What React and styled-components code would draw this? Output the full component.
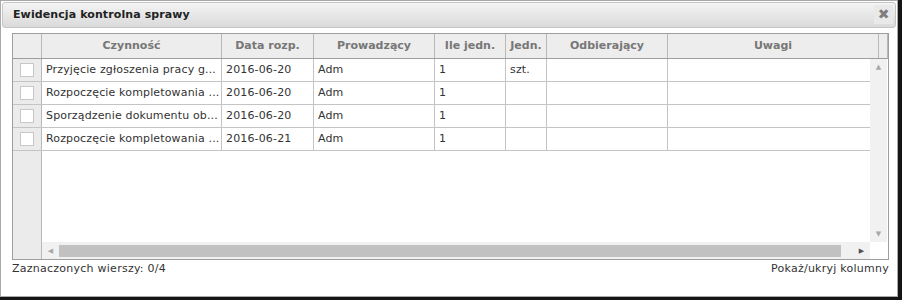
import React from 'react';
import styled, { createGlobalStyle } from 'styled-components';

const GlobalStyle = createGlobalStyle`
  html, body {
    margin: 0;
    padding: 0;
    background: #151515;
  }
  body {
    font-family: "DejaVu Sans", Verdana, sans-serif;
    font-size: 11px;
    color: #333;
  }
`;

const columns = [
  { key: 'czynnosc', title: 'Czynność', width: 180 },
  { key: 'data', title: 'Data rozp.', width: 92 },
  { key: 'prow', title: 'Prowadzący', width: 121 },
  { key: 'ile', title: 'Ile jedn.', width: 71 },
  { key: 'jedn', title: 'Jedn.', width: 41 },
  { key: 'odb', title: 'Odbierający', width: 121 },
  { key: 'uwagi', title: 'Uwagi', width: 211 },
];

const rows = [
  { id: 1, czynnosc: 'Przyjęcie zgłoszenia pracy g...', data: '2016-06-20', prow: 'Adm', ile: '1', jedn: 'szt.', odb: '', uwagi: '' },
  { id: 2, czynnosc: 'Rozpoczęcie kompletowania ...', data: '2016-06-20', prow: 'Adm', ile: '1', jedn: '', odb: '', uwagi: '' },
  { id: 3, czynnosc: 'Sporządzenie dokumentu ob...', data: '2016-06-20', prow: 'Adm', ile: '1', jedn: '', odb: '', uwagi: '' },
  { id: 4, czynnosc: 'Rozpoczęcie kompletowania ...', data: '2016-06-21', prow: 'Adm', ile: '1', jedn: '', odb: '', uwagi: '' },
];

function App() {
  return (
    <>
      <GlobalStyle />
      <Dialog>
        <TitleBar>
          <Title>Ewidencja kontrolna sprawy</Title>
          <CloseButton type="button">✖</CloseButton>
        </TitleBar>
        <Content>
          <Grid>
            <HeaderRow>
              <CheckHead />
              {columns.map((col) => (
                <HeadCell key={col.key} $width={col.width}>
                  {col.title}
                </HeadCell>
              ))}
              <HeadFiller />
            </HeaderRow>
            <Body>
              <Main>
                <RowsArea>
                  {rows.map((row) => (
                    <Row key={row.id}>
                      <CheckCell>
                        <CheckBox />
                      </CheckCell>
                      {columns.map((col) => (
                        <Cell key={col.key} $width={col.width}>
                          {row[col.key]}
                        </Cell>
                      ))}
                    </Row>
                  ))}
                  <Filler>
                    <Gutter />
                  </Filler>
                </RowsArea>
                <BottomBar>
                  <Gutter />
                  <HScroll>
                    <Arrow $dim>◀</Arrow>
                    <HThumb />
                    <Arrow>▶</Arrow>
                  </HScroll>
                </BottomBar>
              </Main>
              <VScrollCol>
                <VScroll>
                  <Arrow $dim>▲</Arrow>
                  <Arrow $dim>▼</Arrow>
                </VScroll>
                <Corner />
              </VScrollCol>
            </Body>
          </Grid>
          <Footer>
            <span>Zaznaczonych wierszy: 0/4</span>
            <span>Pokaż/ukryj kolumny</span>
          </Footer>
        </Content>
      </Dialog>
    </>
  );
}

export default App;

const Dialog = styled.div`
  box-sizing: border-box;
  width: 898px;
  height: 297px;
  border: 1px solid #a9a9a9;
  background: #fff;
  padding: 1px;
`;

const TitleBar = styled.div`
  box-sizing: border-box;
  height: 26px;
  display: flex;
  align-items: center;
  justify-content: space-between;
  padding: 0 2px 1px 10px;
  border: 1px solid #c6c6c6;
  border-radius: 3px;
  background: linear-gradient(#f4f4f4, #dadada);
`;

const Title = styled.div`
  font-weight: bold;
  font-size: 11px;
  color: #222;
  letter-spacing: 0.1px;
`;

const CloseButton = styled.button`
  width: 19px;
  height: 19px;
  padding: 0;
  border: none;
  background: #e9e9e9;
  color: #7e7e7e;
  font-size: 14px;
  line-height: 19px;
  font-family: "DejaVu Sans", sans-serif;
`;

const Content = styled.div`
  padding: 5px 8px 0 10px;
`;

const Grid = styled.div`
  box-sizing: border-box;
  width: 877px;
  height: 227px;
  border: 1px solid #9e9e9e;
  display: flex;
  flex-direction: column;
  overflow: hidden;
`;

const HeaderRow = styled.div`
  display: flex;
  height: 24px;
  border-bottom: 1px solid #9e9e9e;
  background: #ededed;
  flex-shrink: 0;
`;

const CheckHead = styled.div`
  box-sizing: border-box;
  width: 29px;
  flex-shrink: 0;
  border-right: 1px solid #b8b8b8;
`;

const HeadCell = styled.div`
  box-sizing: border-box;
  width: ${(p) => p.$width}px;
  flex-shrink: 0;
  border-right: 1px solid #b8b8b8;
  display: flex;
  align-items: center;
  justify-content: center;
  padding-bottom: 1px;
  font-weight: bold;
  color: #777;
  white-space: nowrap;
  overflow: hidden;
`;

const HeadFiller = styled.div`
  box-sizing: border-box;
  width: 9px;
  flex-shrink: 0;
  border-right: 1px solid #b8b8b8;
`;

const Body = styled.div`
  flex: 1;
  display: flex;
  min-height: 0;
`;

const Main = styled.div`
  flex: 1;
  min-width: 0;
  display: flex;
  flex-direction: column;
`;

const RowsArea = styled.div`
  flex: 1;
  display: flex;
  flex-direction: column;
  overflow: hidden;
`;

const Row = styled.div`
  display: flex;
  height: 22px;
  border-bottom: 1px solid #c4c4c4;
  flex-shrink: 0;
`;

const CheckCell = styled.div`
  box-sizing: border-box;
  width: 29px;
  flex-shrink: 0;
  background: #ebebeb;
  border-right: 1px solid #b8b8b8;
  display: flex;
  align-items: center;
  justify-content: center;
`;

const CheckBox = styled.div`
  box-sizing: border-box;
  width: 14px;
  height: 14px;
  border: 1px solid #c8c8c8;
  background: #fff;
`;

const Cell = styled.div`
  box-sizing: border-box;
  width: ${(p) => p.$width}px;
  flex-shrink: 0;
  border-right: 1px solid #c4c4c4;
  padding: 0 4px 2px;
  display: flex;
  align-items: center;
  white-space: nowrap;
  overflow: hidden;
  color: #333;
  letter-spacing: 0.15px;
`;

const Filler = styled.div`
  flex: 1;
  display: flex;
`;

const Gutter = styled.div`
  box-sizing: border-box;
  width: 29px;
  flex-shrink: 0;
  background: #ebebeb;
  border-right: 1px solid #b8b8b8;
`;

const BottomBar = styled.div`
  display: flex;
  height: 17px;
  flex-shrink: 0;
`;

const HScroll = styled.div`
  flex: 1;
  display: flex;
  align-items: center;
  background: #f1f1f1;
  padding: 0 3px;
  gap: 3px;
`;

const HThumb = styled.div`
  flex: 1;
  height: 12px;
  margin-right: 12px;
  background: #c1c1c1;
`;

const Arrow = styled.span`
  width: 11px;
  text-align: center;
  font-size: 7px;
  color: ${(p) => (p.$dim ? '#a8a8a8' : '#505050')};
`;

const VScrollCol = styled.div`
  width: 17px;
  flex-shrink: 0;
  display: flex;
  flex-direction: column;
  margin-right: 1px;
`;

const VScroll = styled.div`
  flex: 1;
  background: #f1f1f1;
  display: flex;
  flex-direction: column;
  justify-content: space-between;
  align-items: center;
  padding: 4px 0;
`;

const Corner = styled.div`
  height: 17px;
  background: #fff;
`;

const Footer = styled.div`
  display: flex;
  justify-content: space-between;
  width: 877px;
  padding-top: 2px;
  color: #333;
  letter-spacing: 0.25px;
`;
